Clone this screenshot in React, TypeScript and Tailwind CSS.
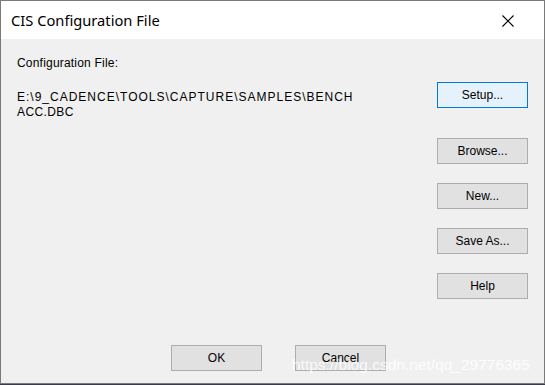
const SIDE_BUTTONS = [
  { label: 'Setup...', mt: 'mt-[43px]', focused: true },
  { label: 'Browse...', mt: 'mt-[30px]' },
  { label: 'New...', mt: 'mt-[19px]' },
  { label: 'Save As...', mt: 'mt-[19px]' },
  { label: 'Help', mt: 'mt-[19px]' },
]

function DlgButton({ label, focused, className = '' }: { label: string; focused?: boolean; className?: string }) {
  return (
    <div
      className={`w-[91px] h-[26px] flex items-center justify-center text-[12px] text-black border ${
        focused ? 'bg-[#e5f1fb] border-[#0078d7]' : 'bg-[#e1e1e1] border-[#adadad]'
      } ${className}`}
    >
      {label}
    </div>
  )
}

export default function App() {
  return (
    <div className="w-[545px] h-[385px] bg-[#3a3a4a]">
      <div
        className="relative w-[545px] h-[384px] border border-[#7a7a7a] bg-[#f0f0f0] flex flex-col"
        style={{ fontFamily: '"Liberation Sans", Arial, sans-serif' }}
      >
        {/* Title bar */}
        <div className="h-[38px] bg-white flex items-center justify-between pl-[10px] pr-[30px] shrink-0">
          <span className="text-[14.7px] text-black" style={{ fontFamily: '"Noto Sans", "Open Sans", sans-serif' }}>
            CIS Configuration File
          </span>
          <svg width="12" height="12" viewBox="0 0 12 12" className="mt-[1px]">
            <path d="M0.5 0.5 L11.5 11.5 M11.5 0.5 L0.5 11.5" stroke="#000" strokeWidth="1.1" />
          </svg>
        </div>

        {/* Body */}
        <div className="flex flex-1">
          <div className="flex-1 pl-[16px] pt-[17px] text-[12px] text-black leading-[15px]">
            <p className="tracking-[0.2px]">Configuration File:</p>
            <p className="mt-[19px] tracking-[1px]">E:\9_CADENCE\TOOLS\CAPTURE\SAMPLES\BENCH</p>
            <p className="tracking-[0.4px]">ACC.DBC</p>
          </div>
          <div className="w-[107px] flex flex-col">
            {SIDE_BUTTONS.map(b => (
              <DlgButton key={b.label} label={b.label} focused={b.focused} className={b.mt} />
            ))}
          </div>
        </div>

        {/* OK / Cancel */}
        <div className="flex gap-[33px] pl-[170px] pb-[12px]">
          <DlgButton label="OK" />
          <DlgButton label="Cancel" />
        </div>

        {/* watermark */}
        <span className="absolute left-[291px] top-[352px] text-[15.5px] text-white/80 whitespace-nowrap">
          https://blog.csdn.net/qq_29776365
        </span>
      </div>
    </div>
  )
}
